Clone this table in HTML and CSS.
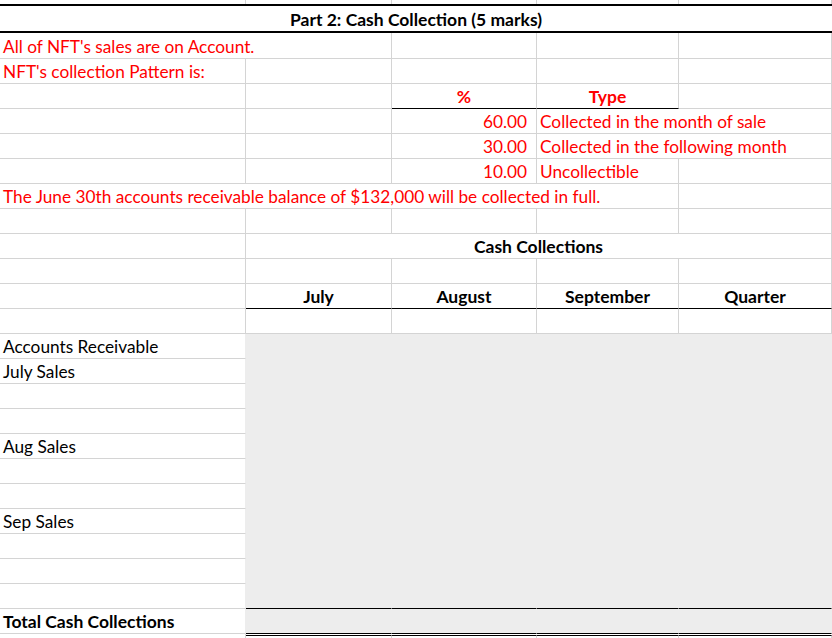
FILE: index.html
```html
<!DOCTYPE html>
<html lang="en">
<head>
<meta charset="utf-8">
<title>Part 2: Cash Collection</title>
<link rel="stylesheet" href="styles.css">
</head>
<body>
<div class="sheet">
  <div class="row r-thin">
    <div class="c"></div><div class="c"></div><div class="c"></div><div class="c"></div><div class="c"></div>
  </div>
  <div class="row r-title">
    <div class="c span5 center bold">Part 2: Cash Collection (5 marks)</div>
  </div>
  <div class="row r-first">
    <div class="c span2 red">All of NFT's sales are on Account.</div><div class="c"></div><div class="c"></div><div class="c"></div>
  </div>
  <div class="row">
    <div class="c red">NFT's collection Pattern is:</div><div class="c"></div><div class="c"></div><div class="c"></div><div class="c"></div>
  </div>
  <div class="row">
    <div class="c"></div><div class="c"></div><div class="c center bold red under">%</div><div class="c center bold red under">Type</div><div class="c"></div>
  </div>
  <div class="row">
    <div class="c"></div><div class="c"></div><div class="c right red num">60.00</div><div class="c span2 red">Collected in the month of sale</div>
  </div>
  <div class="row">
    <div class="c"></div><div class="c"></div><div class="c right red num">30.00</div><div class="c span2 red">Collected in the following month</div>
  </div>
  <div class="row">
    <div class="c"></div><div class="c"></div><div class="c right red num">10.00</div><div class="c red">Uncollectible</div><div class="c"></div>
  </div>
  <div class="row">
    <div class="c span4 red">The June 30th accounts receivable balance of $132,000 will be collected in full.</div><div class="c"></div>
  </div>
  <div class="row">
    <div class="c"></div><div class="c"></div><div class="c"></div><div class="c"></div><div class="c"></div>
  </div>
  <div class="row">
    <div class="c"></div><div class="c span4 center bold">Cash Collections</div>
  </div>
  <div class="row">
    <div class="c"></div><div class="c"></div><div class="c"></div><div class="c"></div><div class="c"></div>
  </div>
  <div class="row">
    <div class="c"></div><div class="c center bold under">July</div><div class="c center bold under">August</div><div class="c center bold under">September</div><div class="c center bold under">Quarter</div>
  </div>
  <div class="row">
    <div class="c"></div><div class="c"></div><div class="c"></div><div class="c"></div><div class="c"></div>
  </div>
  <div class="row filled">
    <div class="c">Accounts Receivable</div><div class="c"></div><div class="c"></div><div class="c"></div><div class="c"></div>
  </div>
  <div class="row filled">
    <div class="c">July Sales</div><div class="c"></div><div class="c"></div><div class="c"></div><div class="c"></div>
  </div>
  <div class="row filled">
    <div class="c"></div><div class="c"></div><div class="c"></div><div class="c"></div><div class="c"></div>
  </div>
  <div class="row filled">
    <div class="c"></div><div class="c"></div><div class="c"></div><div class="c"></div><div class="c"></div>
  </div>
  <div class="row filled">
    <div class="c">Aug Sales</div><div class="c"></div><div class="c"></div><div class="c"></div><div class="c"></div>
  </div>
  <div class="row filled">
    <div class="c"></div><div class="c"></div><div class="c"></div><div class="c"></div><div class="c"></div>
  </div>
  <div class="row filled">
    <div class="c"></div><div class="c"></div><div class="c"></div><div class="c"></div><div class="c"></div>
  </div>
  <div class="row filled">
    <div class="c">Sep Sales</div><div class="c"></div><div class="c"></div><div class="c"></div><div class="c"></div>
  </div>
  <div class="row filled">
    <div class="c"></div><div class="c"></div><div class="c"></div><div class="c"></div><div class="c"></div>
  </div>
  <div class="row filled">
    <div class="c"></div><div class="c"></div><div class="c"></div><div class="c"></div><div class="c"></div>
  </div>
  <div class="row filled">
    <div class="c"></div><div class="c under"></div><div class="c under"></div><div class="c under"></div><div class="c under"></div>
  </div>
  <div class="row filled">
    <div class="c bold">Total Cash Collections</div><div class="c under"></div><div class="c under"></div><div class="c under"></div><div class="c under"></div>
  </div>
  <div class="row r-last">
    <div class="c"></div><div class="c dbl"></div><div class="c dbl"></div><div class="c dbl"></div><div class="c dbl"></div>
  </div>
</div>
</body>
</html>
```
FILE: styles.css
```css
html, body {
  margin: 0;
  padding: 0;
  background: #ffffff;
  overflow: hidden;
}

.sheet {
  width: 832px;
  height: 638px;
  overflow: hidden;
  font-family: Lato, "Noto Sans", sans-serif;
  font-size: 17.25px;
  color: #000000;
}

.row {
  display: grid;
  grid-template-columns: 246px 146px 145px 142px 153px;
  height: 25px;
}

.c {
  box-sizing: border-box;
  border-right: 1px solid #d4d4d4;
  border-bottom: 1px solid #d4d4d4;
  padding: 0 3px 1px;
  display: flex;
  align-items: flex-end;
  line-height: 21px;
  white-space: nowrap;
}

.span2 { grid-column: span 2; }
.span4 { grid-column: span 4; }
.span5 { grid-column: span 5; }

.center { justify-content: center; }
.right { justify-content: flex-end; }
.num { padding-right: 9px; }
.bold { font-weight: 700; font-size: 17.5px; }
.red { color: #ff0000; }

.under { border-bottom-color: #000000; }

.r-thin { height: 4px; }
.r-thin .c { border-bottom: 0; padding: 0; }

.r-title { height: 29px; }
.r-title .c {
  border-top: 2px solid #000000;
  border-bottom: 2px solid #000000;
  border-right: 0;
}

.r-first { height: 26px; }

.filled .c:first-child { border-right-color: #ededed; }
.filled .c + .c {
  background: #ededed;
  border-right-color: #ededed;
  border-bottom-color: #ededed;
}
.filled .c.under { border-bottom-color: #000000; }

.r-last { height: 4px; }
.r-last .c { border-bottom: 0; padding: 0; }
.r-last .dbl {
  margin-top: 1px;
  border-top: 1px solid #000000;
}
```
